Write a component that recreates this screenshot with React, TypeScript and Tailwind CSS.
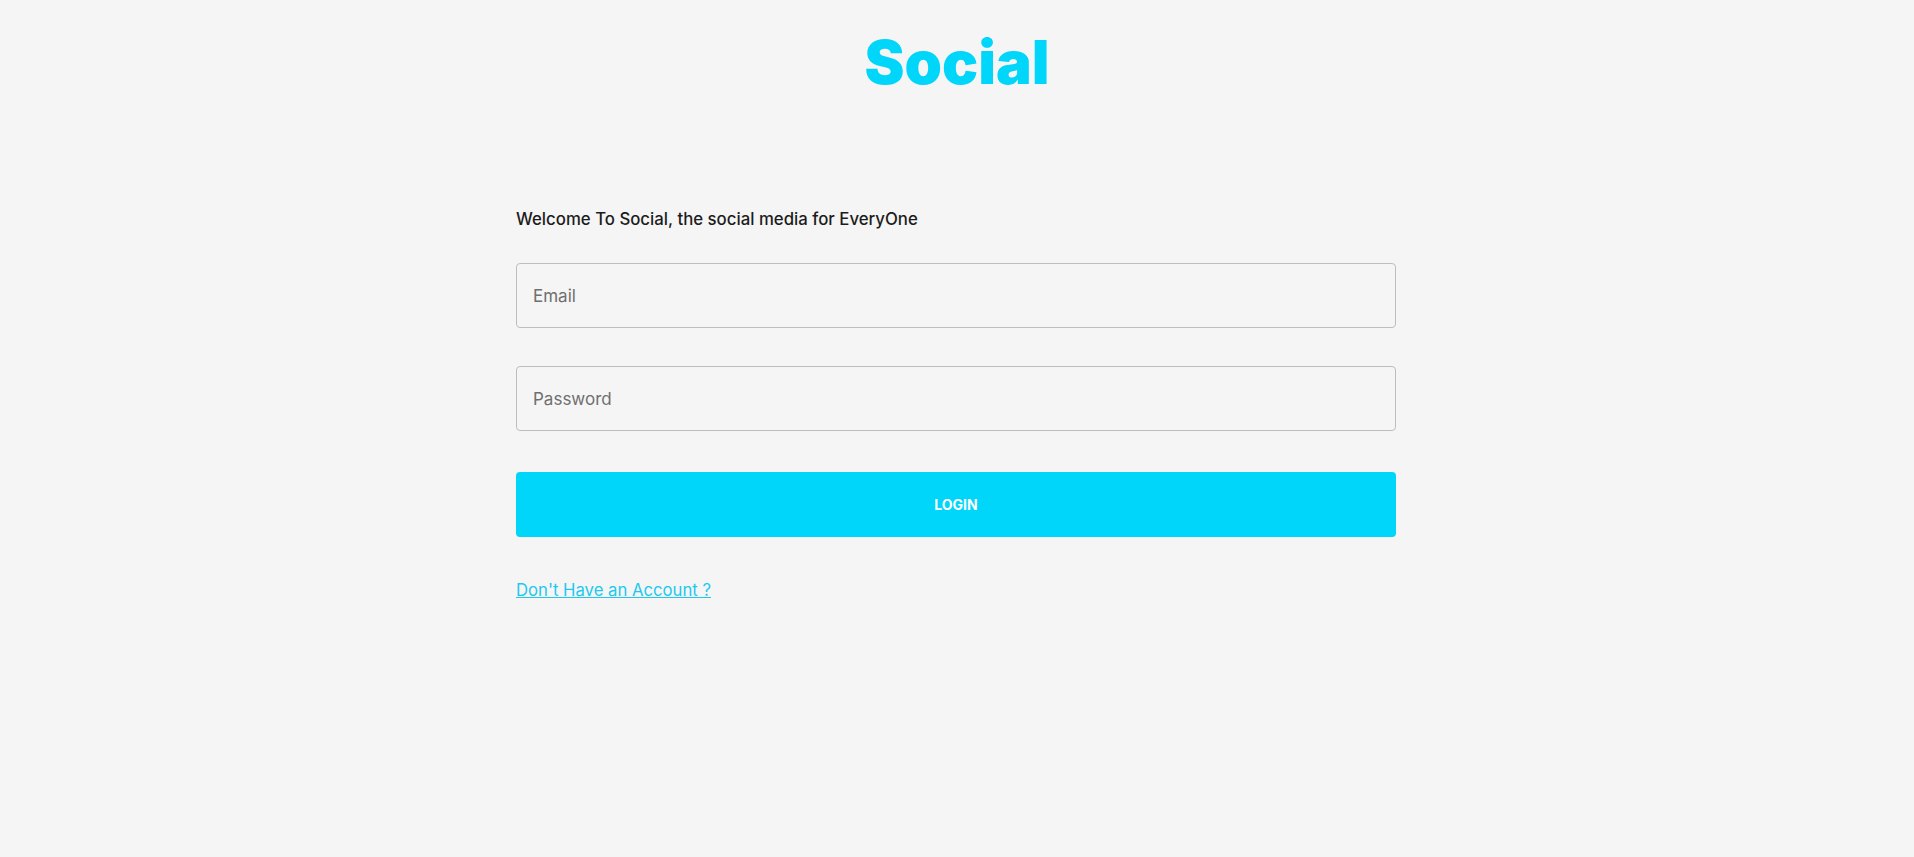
export default function App() {
  return (
    <div className="min-h-[857px] bg-[#f5f5f5] font-['Inter',sans-serif]">
      <h1 className="pt-[26px] text-center text-[60px] leading-[72px] font-black text-[#00d5fa]">
        Social
      </h1>

      <div className="mx-auto mt-[109px] w-[880px] -translate-x-px">
        <p className="text-[16.8px] leading-6 font-medium text-[#1c1c1c]">
          Welcome To Social, the social media for EveryOne
        </p>

        <input
          type="email"
          placeholder="Email"
          className="mt-8 block h-[65px] w-full rounded border border-[#bdbdbd] bg-transparent px-4 text-[17px] text-[#333] placeholder:text-[#6f6f6f] outline-none"
        />

        <input
          type="password"
          placeholder="Password"
          className="mt-[38px] block h-[65px] w-full rounded border border-[#bdbdbd] bg-transparent px-4 text-[17px] text-[#333] placeholder:text-[#6f6f6f] outline-none"
        />

        <button className="mt-[41px] block h-[65px] w-full rounded bg-[#00d5fa] text-[14px] font-bold text-white">
          LOGIN
        </button>

        <a
          href="#"
          className="mt-[41px] inline-block text-[16.7px] leading-6 text-[#1ec8ef] underline"
        >
          Don't Have an Account ?
        </a>
      </div>
    </div>
  );
}
